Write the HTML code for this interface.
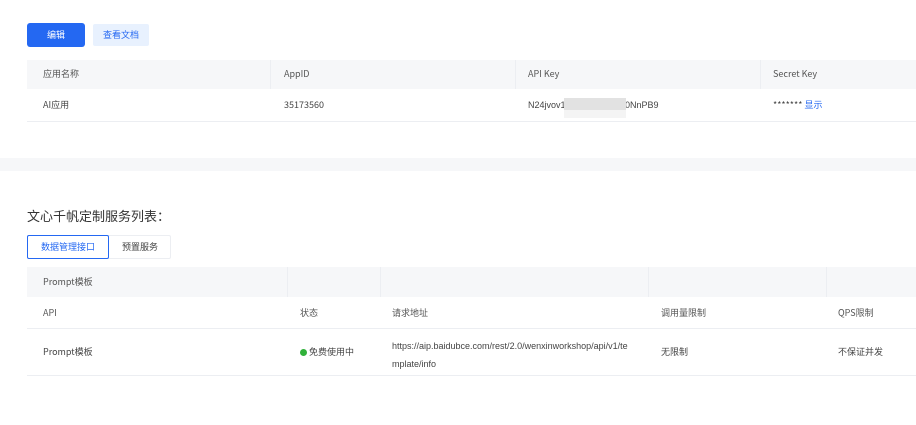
<!DOCTYPE html>
<html><head><meta charset="utf-8"><style>
*{margin:0;padding:0;box-sizing:border-box}
body{width:916px;height:425px;background:#fff;font-family:"Noto Sans CJK SC",sans-serif;font-size:9px;color:#444;position:relative;overflow:hidden}
.a{position:absolute;white-space:nowrap;line-height:12px}
.l{font-family:"Liberation Sans",sans-serif}
</style></head><body>
<div class="a" style="left:27px;top:23px;width:58px;height:24px;background:#2468f2;border-radius:3px;color:#fff;text-align:center;line-height:24px">编辑</div>
<div class="a" style="left:93px;top:24px;width:56px;height:22px;background:#e8f1fe;border-radius:2px;color:#2468f2;text-align:center;line-height:22px">查看文档</div>

<div class="a" style="left:27px;top:60px;width:889px;height:29px;background:#f6f7f9"></div>
<div class="a" style="left:270px;top:60px;width:1px;height:29px;background:#eceef2"></div>
<div class="a" style="left:515px;top:60px;width:1px;height:29px;background:#eceef2"></div>
<div class="a" style="left:760px;top:60px;width:1px;height:29px;background:#eceef2"></div>
<div class="a" style="left:43px;top:68px;color:#555">应用名称</div>
<div class="a" style="left:284px;top:68px;color:#555">AppID</div>
<div class="a" style="left:528px;top:68px;color:#555">API Key</div>
<div class="a" style="left:773px;top:68px;color:#555">Secret Key</div>
<div class="a" style="left:27px;top:121px;width:889px;height:1px;background:#eceef2"></div>
<div class="a" style="left:43px;top:99px">AI应用</div>
<div class="a" style="left:284px;top:99px">35173560</div>
<div class="a l" style="left:528px;top:99px">N24jvov1</div>
<div class="a l" style="left:625px;top:99px">0NnPB9</div>
<div class="a" style="left:564px;top:98px;width:62px;height:12px;background:#e2e2e2"></div>
<div class="a" style="left:564px;top:110px;width:62px;height:8px;background:#f4f4f4"></div>
<div class="a" style="left:773px;top:99px">******* <span style="color:#2468f2">显示</span></div>

<div class="a" style="left:0;top:158px;width:916px;height:13px;background:#f6f7f9"></div>

<div class="a" style="left:27px;top:207px;font-size:13px;line-height:18px;color:#333">文心千帆定制服务列表：</div>
<div class="a" style="left:27px;top:235px;width:144px;height:24px;border:1px solid #eceef2;border-radius:2px"></div>
<div class="a" style="left:27px;top:235px;width:82px;height:24px;border:1px solid #2468f2;border-radius:2px;color:#2468f2;text-align:center;line-height:22px">数据管理接口</div>
<div class="a" style="left:109px;top:235px;width:62px;height:24px;text-align:center;line-height:24px">预置服务</div>

<div class="a" style="left:27px;top:267px;width:889px;height:30px;background:#f6f7f9"></div>
<div class="a" style="left:287px;top:267px;width:1px;height:30px;background:#eceef2"></div>
<div class="a" style="left:380px;top:267px;width:1px;height:30px;background:#eceef2"></div>
<div class="a" style="left:648px;top:267px;width:1px;height:30px;background:#eceef2"></div>
<div class="a" style="left:826px;top:267px;width:1px;height:30px;background:#eceef2"></div>
<div class="a" style="left:43px;top:276px;color:#555">Prompt模板</div>
<div class="a" style="left:43px;top:307px;color:#555">API</div>
<div class="a" style="left:300px;top:307px;color:#555">状态</div>
<div class="a" style="left:392px;top:307px;color:#555">请求地址</div>
<div class="a" style="left:661px;top:307px;color:#555">调用量限制</div>
<div class="a" style="left:838px;top:307px;color:#555">QPS限制</div>
<div class="a" style="left:27px;top:328px;width:889px;height:1px;background:#eceef2"></div>
<div class="a" style="left:43px;top:346px">Prompt模板</div>
<div class="a" style="left:300px;top:346px"><span style="display:inline-block;width:7px;height:7px;border-radius:50%;background:#30b13a;vertical-align:-1px"></span> 免费使用中</div>
<div class="a l" style="left:392px;top:337px;line-height:18px;font-size:9px">https://aip.baidubce.com/rest/2.0/wenxinworkshop/api/v1/te<br>mplate/info</div>
<div class="a" style="left:661px;top:346px">无限制</div>
<div class="a" style="left:838px;top:346px">不保证并发</div>
<div class="a" style="left:27px;top:375px;width:889px;height:1px;background:#eceef2"></div>
</body></html>
